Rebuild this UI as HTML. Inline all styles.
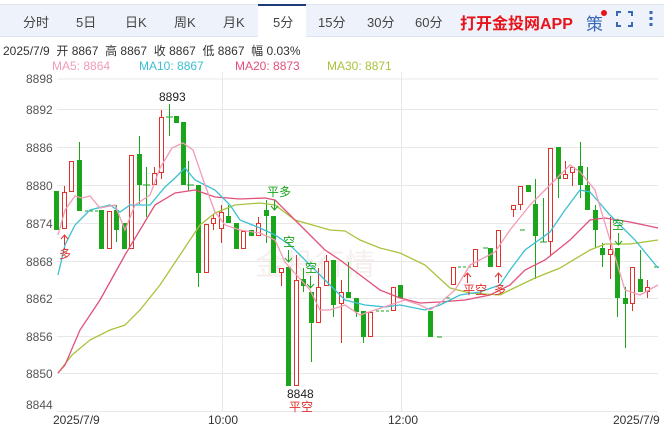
<!DOCTYPE html>
<html><head><meta charset="utf-8"><style>
body{margin:0;width:664px;height:425px;overflow:hidden;background:#fff;font-family:"Liberation Sans","Noto Sans CJK SC",sans-serif;position:relative}
.bar{position:absolute;left:0;top:4px;width:664px;height:31px;background:#eef3fb;border-top:1px solid #dde4ee;border-bottom:1px solid #dde4ee}
.t{position:absolute;top:12px;font-size:13px;color:#444}
.act{position:absolute;left:258px;top:4px;width:48px;height:33px;background:#fff;border-top:2px solid #1d3a7a;box-sizing:border-box}
.ab{position:absolute;font-size:12px}
</style></head><body>
<div class="bar"></div>
<div class="act"></div>
<span class="t" style="left:23px">分时</span>
<span class="t" style="left:76px">5日</span>
<span class="t" style="left:125px">日K</span>
<span class="t" style="left:174px">周K</span>
<span class="t" style="left:223px">月K</span>
<span class="t" style="left:273px">5分</span>
<span class="t" style="left:318px">15分</span>
<span class="t" style="left:367px">30分</span>
<span class="t" style="left:415px">60分</span>
<span style="position:absolute;left:460px;top:10px;font-size:16px;font-weight:bold;color:#e8141b">打开金投网APP</span>
<span style="position:absolute;left:586px;top:10px;font-size:17px;color:#3a68b8">策</span>
<span style="position:absolute;left:601px;top:10px;width:6px;height:6px;border-radius:3px;background:#e8141b"></span>
<svg style="position:absolute;left:616px;top:11px" width="17" height="16"><path d="M1 5V1H5M12 1H16V5M16 11V15H12M5 15H1V11" fill="none" stroke="#3a68b8" stroke-width="2"/></svg>
<svg style="position:absolute;left:649px;top:11px" width="5" height="16"><rect x="0.5" y="0" width="3" height="3" fill="#3a68b8"/><rect x="0.5" y="6" width="3" height="3" fill="#3a68b8"/><rect x="0.5" y="12" width="3" height="3" fill="#3a68b8"/></svg>
<div class="ab" style="left:3px;top:42px;color:#333">2025/7/9&nbsp; 开 8867&nbsp; 高 8867&nbsp; 收 8867&nbsp; 低 8867&nbsp; 幅 0.03%</div>
<div class="ab" style="left:52px;top:59px;color:#f29bb5">MA5: 8864</div>
<div class="ab" style="left:139px;top:59px;color:#3cbfd2">MA10: 8867</div>
<div class="ab" style="left:235px;top:59px;color:#e0507a">MA20: 8873</div>
<div class="ab" style="left:327px;top:59px;color:#a8c33c">MA30: 8871</div>
<svg style="position:absolute;left:0;top:0" width="664" height="425">
<g stroke="#e8e8e8" stroke-width="1">
<line x1="57" y1="79" x2="658" y2="79"/><line x1="57" y1="109.5" x2="658" y2="109.5"/><line x1="57" y1="147.5" x2="658" y2="147.5"/><line x1="57" y1="185.5" x2="658" y2="185.5"/><line x1="57" y1="223.5" x2="658" y2="223.5"/><line x1="57" y1="261.5" x2="658" y2="261.5"/><line x1="57" y1="298.5" x2="658" y2="298.5"/><line x1="57" y1="336.5" x2="658" y2="336.5"/><line x1="57" y1="373.5" x2="658" y2="373.5"/><line x1="57" y1="411.5" x2="658" y2="411.5"/>
<line x1="222.5" y1="72" x2="222.5" y2="412"/><line x1="401.5" y1="72" x2="401.5" y2="412"/>
</g>
<g font-size="12" fill="#555" font-family="Liberation Sans,sans-serif">
<text x="26" y="83">8898</text><text x="26" y="114">8892</text><text x="26" y="152">8886</text><text x="26" y="190">8880</text><text x="26" y="228">8874</text><text x="26" y="266">8868</text><text x="26" y="303">8862</text><text x="26" y="341">8856</text><text x="26" y="378">8850</text><text x="26" y="409">8844</text>
<text x="53" y="424" fill="#333">2025/7/9</text><text x="208" y="424" fill="#333">10:00</text><text x="388" y="424" fill="#333">12:00</text><text x="613" y="424" fill="#333">2025/7/9</text>
<text x="159" y="101" fill="#222">8893</text><text x="287" y="398" fill="#222">8848</text>
</g>
<text x="255" y="275" font-size="30" fill="#e8c8c8" opacity="0.3" font-family="Noto Sans CJK SC,sans-serif">金投行情</text>
<g stroke="#1aa51a" stroke-width="1">
<line x1="79.5" y1="142" x2="79.5" y2="211"/><line x1="116.5" y1="205" x2="116.5" y2="242"/><line x1="139.5" y1="136" x2="139.5" y2="204"/><line x1="146.5" y1="167" x2="146.5" y2="217"/><line x1="169.5" y1="104" x2="169.5" y2="136"/><line x1="183.5" y1="122" x2="183.5" y2="185"/><line x1="188.5" y1="161" x2="188.5" y2="191"/><line x1="198.5" y1="185" x2="198.5" y2="287"/><line x1="228.5" y1="205" x2="228.5" y2="223"/><line x1="266.5" y1="200" x2="266.5" y2="243"/><line x1="311.5" y1="292" x2="311.5" y2="362"/><line x1="288.5" y1="267" x2="288.5" y2="386"/><line x1="303.5" y1="268" x2="303.5" y2="292"/><line x1="333.5" y1="260" x2="333.5" y2="317"/><line x1="348.5" y1="262" x2="348.5" y2="298"/><line x1="356.5" y1="298" x2="356.5" y2="317"/><line x1="363.5" y1="311" x2="363.5" y2="343"/><line x1="535.5" y1="179" x2="535.5" y2="279"/><line x1="543.5" y1="198" x2="543.5" y2="242"/><line x1="558.5" y1="147" x2="558.5" y2="198"/><line x1="580.5" y1="142" x2="580.5" y2="198"/><line x1="587.5" y1="167" x2="587.5" y2="210"/><line x1="595.5" y1="205" x2="595.5" y2="248"/><line x1="602.5" y1="243" x2="602.5" y2="267"/><line x1="617.5" y1="248" x2="617.5" y2="317"/><line x1="625.5" y1="287" x2="625.5" y2="348"/><line x1="640.5" y1="250" x2="640.5" y2="292"/>
<line x1="85" y1="211" x2="99" y2="211" stroke-dasharray="3,2"/><line x1="143" y1="185" x2="150" y2="185"/><line x1="166" y1="117" x2="173" y2="117"/><line x1="187" y1="185" x2="194" y2="185"/><line x1="540" y1="242" x2="547" y2="242"/><line x1="437" y1="337" x2="442" y2="337"/><line x1="445" y1="298" x2="450" y2="298"/><line x1="520" y1="230" x2="525" y2="230"/><line x1="376" y1="311" x2="390" y2="311" stroke-dasharray="3,2"/><line x1="458" y1="267" x2="472" y2="267" stroke-dasharray="3,2"/><line x1="483" y1="248" x2="488" y2="248"/><line x1="654" y1="267" x2="659" y2="267"/>
</g>
<g fill="#1aa51a">
<rect x="54" y="191" width="5" height="39"/><rect x="77" y="160" width="5" height="51"/><rect x="99" y="210" width="5" height="39"/><rect x="114" y="210" width="5" height="20"/><rect x="122" y="223" width="5" height="26"/><rect x="137" y="154" width="5" height="31"/><rect x="174" y="116" width="5" height="7"/><rect x="181" y="122" width="5" height="63"/><rect x="196" y="185" width="5" height="88"/><rect x="226" y="216" width="5" height="7"/><rect x="234" y="223" width="5" height="26"/><rect x="249" y="230" width="5" height="6"/><rect x="264" y="210" width="5" height="6"/><rect x="271" y="216" width="5" height="57"/><rect x="286" y="267" width="5" height="119"/><rect x="301" y="279" width="5" height="7"/><rect x="309" y="292" width="5" height="31"/><rect x="331" y="260" width="5" height="45"/><rect x="346" y="292" width="5" height="6"/><rect x="354" y="298" width="5" height="14"/><rect x="361" y="311" width="5" height="26"/><rect x="398" y="285" width="5" height="13"/><rect x="428" y="311" width="5" height="26"/><rect x="488" y="248" width="5" height="19"/><rect x="526" y="185" width="5" height="7"/><rect x="533" y="204" width="5" height="32"/><rect x="556" y="147" width="5" height="32"/><rect x="578" y="166" width="5" height="19"/><rect x="585" y="185" width="5" height="25"/><rect x="593" y="210" width="5" height="20"/><rect x="600" y="248" width="5" height="7"/><rect x="615" y="248" width="5" height="50"/><rect x="623" y="298" width="5" height="6"/><rect x="638" y="279" width="5" height="13"/>
</g>
<g stroke="#e0312c" stroke-width="1" fill="#fff">
<line x1="64.5" y1="186" x2="64.5" y2="192"/><line x1="161.5" y1="110" x2="161.5" y2="179"/><line x1="154.5" y1="167" x2="154.5" y2="185"/><line x1="213.5" y1="214" x2="213.5" y2="230"/><line x1="221.5" y1="205" x2="221.5" y2="243"/><line x1="258.5" y1="217" x2="258.5" y2="236"/><line x1="281.5" y1="268" x2="281.5" y2="286"/><line x1="296.5" y1="255" x2="296.5" y2="386"/><line x1="318.5" y1="268" x2="318.5" y2="323"/><line x1="326.5" y1="255" x2="326.5" y2="286"/><line x1="341.5" y1="280" x2="341.5" y2="343"/><line x1="513.5" y1="205" x2="513.5" y2="217"/><line x1="520.5" y1="186" x2="520.5" y2="210"/><line x1="550.5" y1="148" x2="550.5" y2="255"/><line x1="565.5" y1="161" x2="565.5" y2="179"/><line x1="572.5" y1="167" x2="572.5" y2="186"/><line x1="610.5" y1="217" x2="610.5" y2="279"/><line x1="632.5" y1="267" x2="632.5" y2="311"/><line x1="647.5" y1="280" x2="647.5" y2="298"/>
<rect x="62.5" y="192.5" width="4" height="36"/><rect x="69.5" y="161.5" width="4" height="30"/><rect x="107.5" y="211.5" width="4" height="37"/><rect x="129.5" y="155.5" width="4" height="93"/><rect x="152.5" y="173.5" width="4" height="11"/><rect x="159.5" y="117.5" width="4" height="55"/><rect x="204.5" y="224.5" width="4" height="48"/><rect x="211.5" y="218.5" width="4" height="5"/><rect x="219.5" y="212.5" width="4" height="16"/><rect x="241.5" y="231.5" width="4" height="17"/><rect x="256.5" y="223.5" width="4" height="12"/><rect x="279.5" y="268.5" width="4" height="4"/><rect x="294.5" y="280.5" width="4" height="105"/><rect x="316.5" y="287.5" width="4" height="35"/><rect x="324.5" y="261.5" width="4" height="24"/><rect x="339.5" y="292.5" width="4" height="11"/><rect x="368.5" y="312.5" width="4" height="24"/><rect x="391.5" y="287.5" width="4" height="23"/><rect x="451.5" y="267.5" width="4" height="17"/><rect x="473.5" y="249.5" width="4" height="17"/><rect x="496.5" y="230.5" width="4" height="36"/><rect x="511.5" y="205.5" width="4" height="4"/><rect x="518.5" y="186.5" width="4" height="18"/><rect x="548.5" y="148.5" width="4" height="93"/><rect x="563.5" y="174.5" width="4" height="4"/><rect x="570.5" y="167.5" width="4" height="5"/><rect x="608.5" y="249.5" width="4" height="5"/><rect x="630.5" y="267.5" width="4" height="36"/><rect x="645.5" y="287.5" width="4" height="4"/>
</g>
<g fill="none" stroke-width="1.3">
<polyline stroke="#a8c33c" points="58,373 72,355 90,340 110,330 125,325 140,310 160,285 180,255 200,225 215,213 235,205 260,203 275,205 295,220 330,230 345,231 360,240 380,248 400,253 425,265 450,288 470,293 500,295 510,290 535,278 560,268 590,250 605,244 630,244 658,240"/>
<polyline stroke="#e0507a" points="58,373 65,365 80,330 100,300 125,255 140,230 155,205 175,193 195,190 215,197 240,199 265,198 275,200 290,215 310,235 325,250 340,260 360,275 380,290 400,298 420,303 440,302 465,300 490,295 510,285 525,270 545,260 570,240 590,220 605,218 630,222 658,228"/>
<polyline stroke="#3cbfd2" points="58,275 65,245 75,225 90,210 110,205 120,212 130,205 150,205 165,187 175,178 185,168 195,180 215,190 230,205 240,220 260,228 275,235 290,245 310,265 330,285 345,300 365,305 385,307 400,305 425,310 440,305 460,295 480,292 500,285 510,270 525,250 550,232 565,210 580,190 590,192 610,215 635,240 658,268"/>
<polyline stroke="#f29bb5" points="58,235 65,210 75,196 82,198 90,196 100,208 115,205 125,230 135,205 150,195 160,168 172,148 183,143 193,150 205,185 215,212 225,225 240,230 260,233 275,240 285,262 292,270 310,290 320,310 330,310 345,305 360,315 375,310 390,305 405,300 420,305 430,310 440,303 455,290 470,265 495,252 510,230 530,205 545,190 570,165 580,172 595,190 610,240 625,290 640,295 658,285"/>
</g>
<g font-size="12" font-family="Noto Sans CJK SC,sans-serif">
<text x="59" y="258" fill="#e0312c">多</text><path d="M64.5 245V235M61 239L64.5 235 68 239" stroke="#e0312c" fill="none"/>
<text x="267" y="196" fill="#1aa51a">平多</text><path d="M274.5 200V210M271 206L274.5 210 278 206" stroke="#1aa51a" fill="none"/>
<text x="283" y="246" fill="#1aa51a">空</text><path d="M288.5 250V262M285 258L288.5 262 292 258" stroke="#1aa51a" fill="none"/>
<text x="305" y="272" fill="#1aa51a">空</text><path d="M310.5 276V288M307 284L310.5 288 314 284" stroke="#1aa51a" fill="none"/>
<text x="289" y="411" fill="#e0312c">平空</text>
<text x="463" y="294" fill="#e0312c">平空</text><path d="M467.5 283V273M464 277L467.5 273 471 277" stroke="#e0312c" fill="none"/>
<text x="494" y="294" fill="#e0312c">多</text><path d="M498.5 283V273M495 277L498.5 273 502 277" stroke="#e0312c" fill="none"/>
<text x="612" y="229" fill="#1aa51a">空</text><path d="M618.5 233V245M615 241L618.5 245 622 241" stroke="#1aa51a" fill="none"/>
</g>
</svg>
</body></html>
